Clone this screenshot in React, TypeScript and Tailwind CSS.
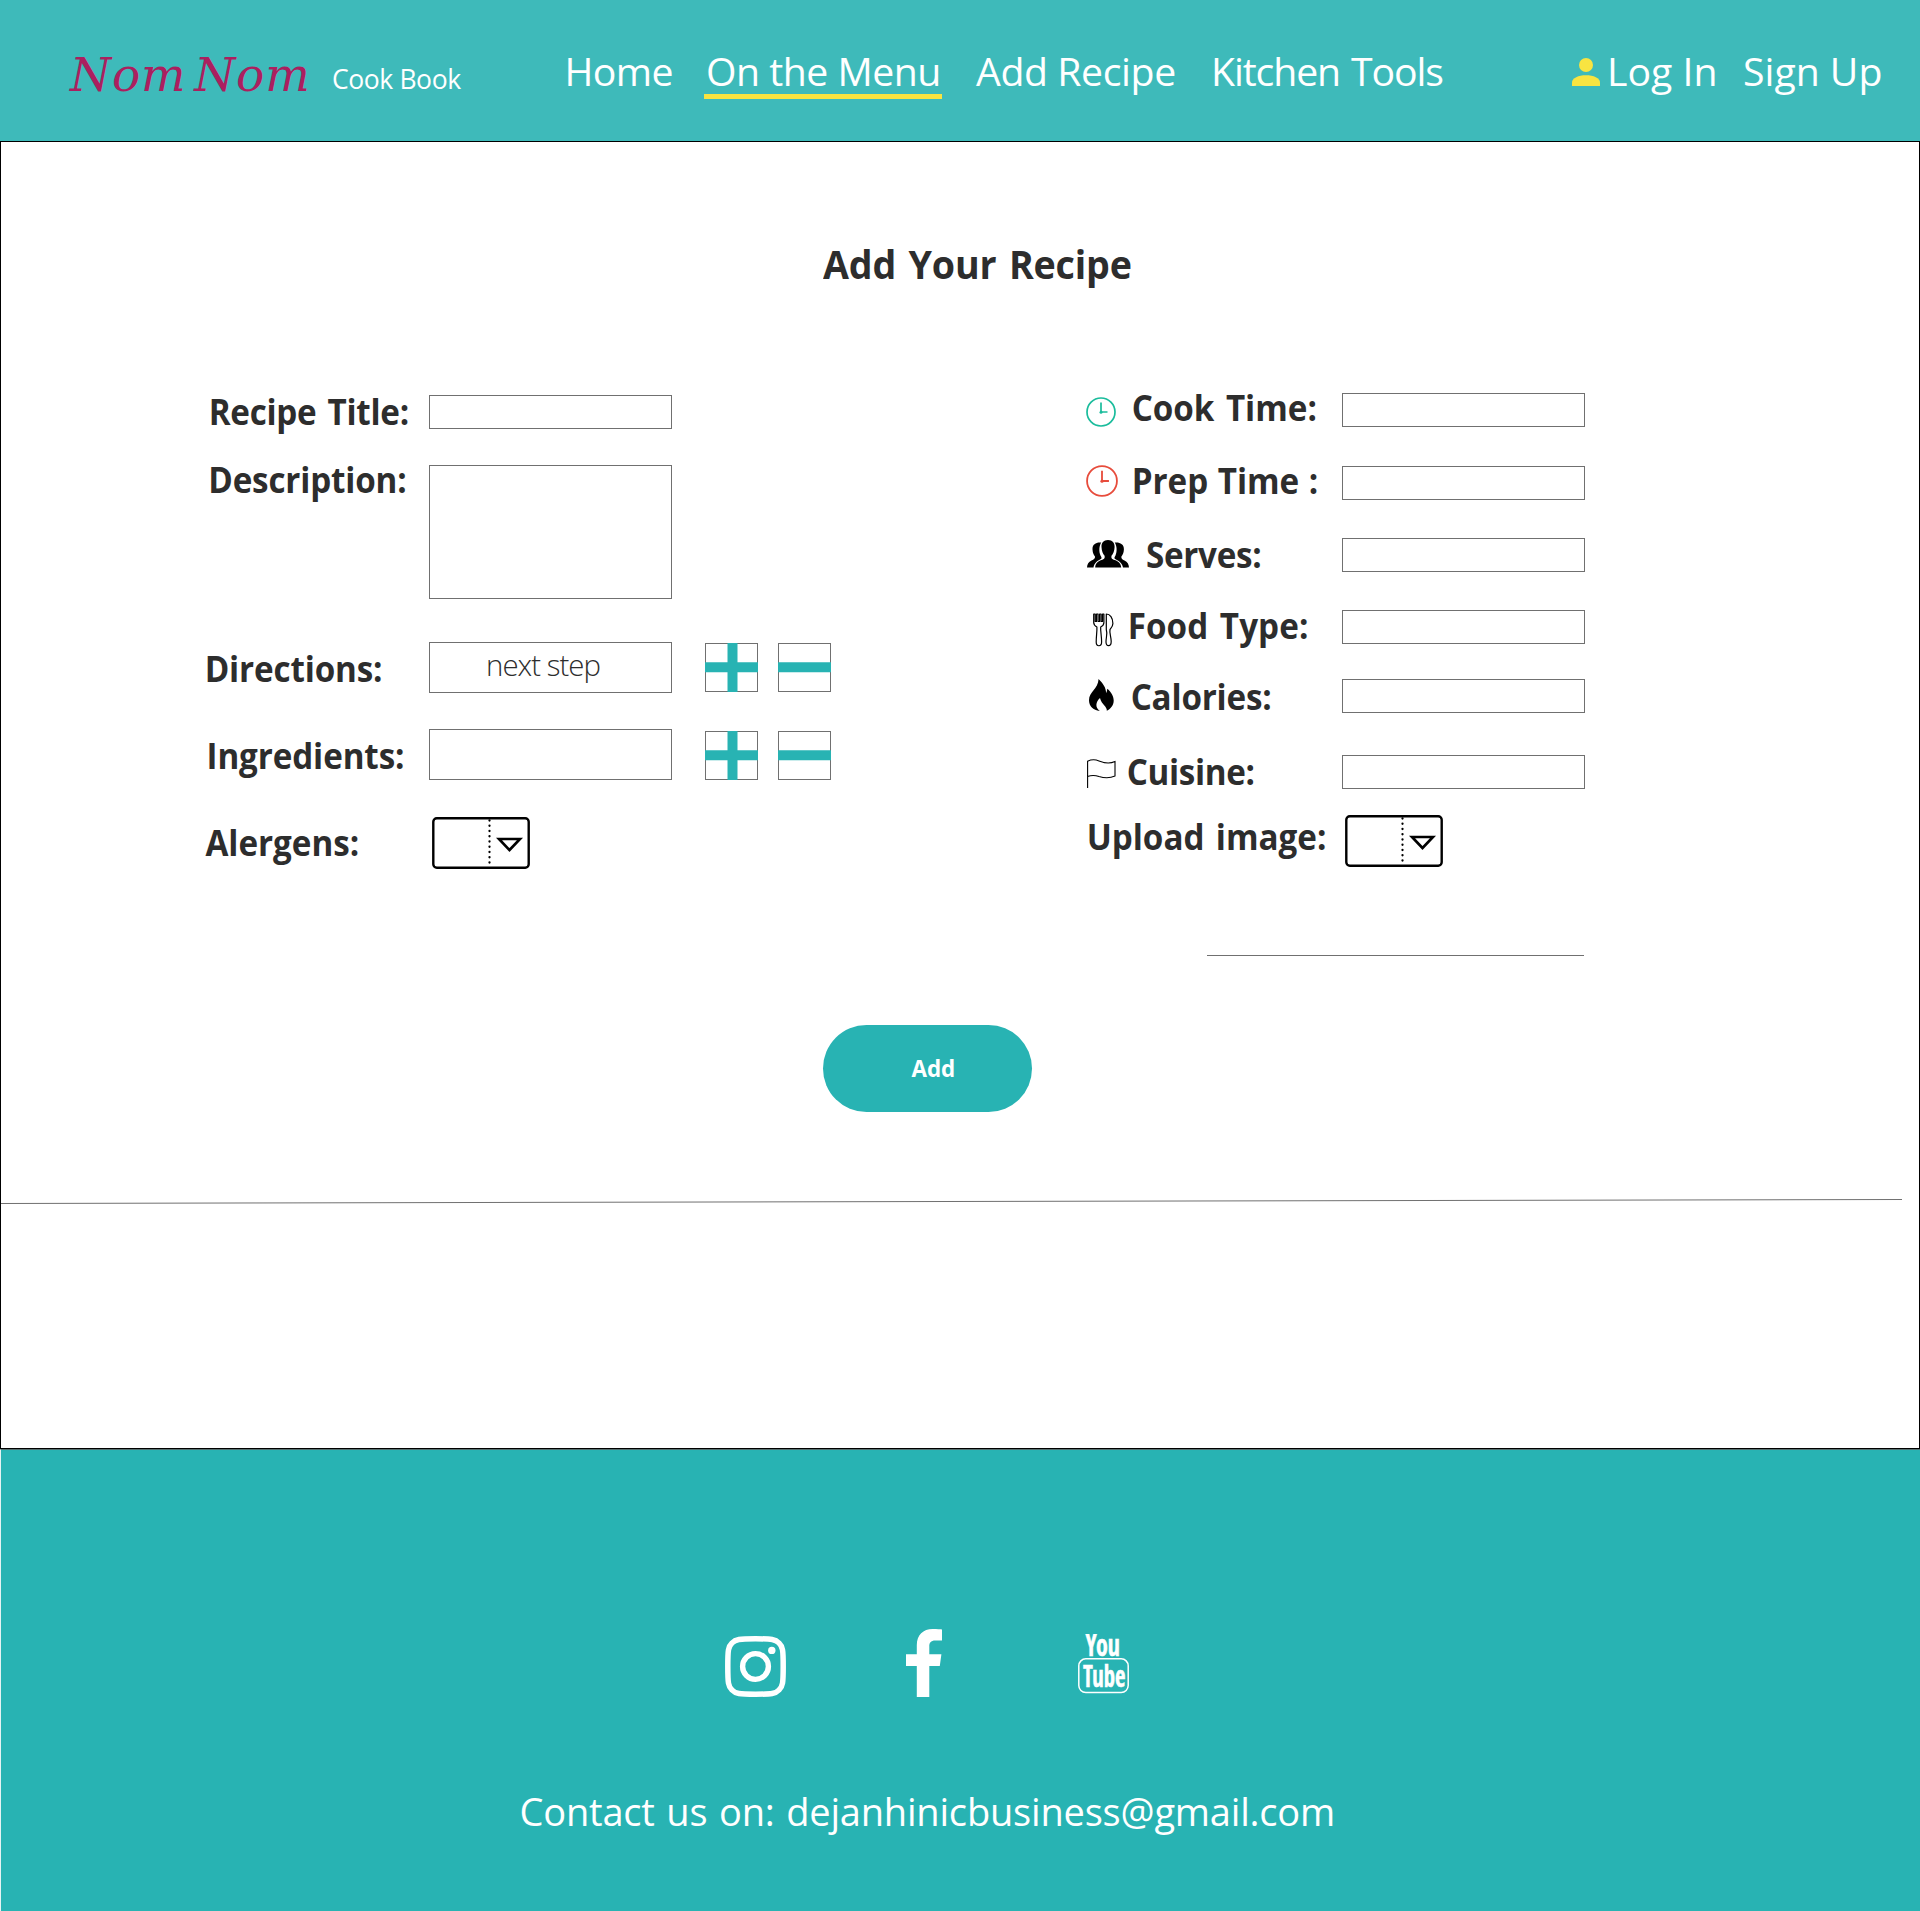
import React from "react";

const navText = "h-[56px] whitespace-nowrap text-[39.2px] leading-[56px] text-white";

function UserIcon() {
  return (
    <svg width="28" height="28" viewBox="0 0 28 28" fill="#f8e441" className="mt-[15px] mr-[7px] shrink-0">
      <circle cx="14" cy="7" r="7" />
      <path d="M0 28v-3.5C0 20 6.500 17.300 14 17.300S28 20 28 24.500V28Z" />
    </svg>
  );
}

function ClockIcon({ color, size }: { color: string; size: number }) {
  return (
    <svg width={size} height={size} viewBox="0 0 30 30" fill="none" stroke={color} strokeWidth="1.700">
      <circle cx="15" cy="15" r="14" />
      <path d="M15 5.500V15H21.500" />
      <circle cx="15" cy="15.200" r="1.500" fill={color} stroke="none" />
    </svg>
  );
}

function GroupIcon() {
  return (
    <svg width="42" height="28" viewBox="0 0 42 28" fill="#000">
      <path d="M14.300 2.600C10 1.900 5.200 3.700 5.500 9.500C5.700 13 6.800 15.200 8 16.500C8.300 18.500 7 19.300 4.500 20.500C1.500 22 .200 24 0 27.600H6.500C7 23 11 20.500 14.300 18.800C14.800 17.600 14.400 16.800 13.500 15.500C11.800 11.500 12 6 14.300 2.600Z" />
      <path d="M27.700 2.600C32 1.900 37.200 3.700 36.900 9.500C36.700 13 35.600 15.200 34.400 16.500C34.100 18.500 35 19.300 37.500 20.500C40.500 22 41.800 24 42 27.600H36C35.500 23 31 20.500 27.700 18.800C27.200 17.600 27.600 16.800 28.500 15.500C30.200 11.500 30 6 27.700 2.600Z" />
      <path d="M21 0C16.500 0 14.300 3.200 14.500 7C14.600 11 16 14 17.600 15.700C18 18.300 17.300 19 14.500 20.100C10.500 21.700 8.500 23.300 8.200 27.600H34.200C33.900 23.300 31.700 21.700 27.700 20.100C24.800 19 24.100 18.300 24.500 15.700C26.100 14 27.500 11 27.600 7C27.700 3.200 25.500 0 21 0Z" />
    </svg>
  );
}

function CutleryIcon() {
  return (
    <svg width="21" height="34" viewBox="0 0 21 34" fill="none" stroke="#000" strokeWidth="1.2" strokeLinejoin="round">
      <path d="M.7 1V9.500C.7 12 2 13 3.900 14C4.200 18 3.200 23 3.200 29C3.200 34 8.600 34 8.600 29C8.600 23 7.400 18 7.700 14C9.700 13 10.900 12 10.900 9.500V1H9.500V8.500H8.100V1H6.600V8.500H5.100V1H3.500V8.500H2.200V1Z" />
      <path d="M13.300 1C17 1 19.900 5 19.900 10.500C19.900 13.500 18 15 17 16.300C16.200 20 18.200 24 18.200 28.500C18.200 34 13 34 13 29C13 24 14.700 21 13.300 16.500Z" />
    </svg>
  );
}

function FlameIcon() {
  return (
    <svg width="25" height="32" viewBox="0 0 25 32" fill="#000">
      <path d="M9.600 0C14 4.500 17 8.500 17.100 14C18 12.800 18 11 18.300 9.800C22.500 13 24.700 18 24.700 21.500C24.700 26 22 29.800 17.800 31.800C18.300 27.500 12.500 25.500 11 19C6.500 23 6 28.500 10.800 31.900C4 31 0 27 0 21.200C0 13 9 10 9.600 0Z" />
    </svg>
  );
}

function FlagIcon() {
  return (
    <svg width="29" height="29" viewBox="0 0 29 29" fill="none" stroke="#000" strokeWidth="1.100">
      <path d="M.6 29V2.200C4 .6 8 .3 12 1.900C17 4 22.500 5 28 2.500V17C22.500 19.500 17 19 12 17.500C8 16.200 4 16.300 .6 17.500" />
    </svg>
  );
}

function SelectBox() {
  return (
    <svg width="98" height="52" viewBox="0 0 98 52" fill="none" stroke="#000" className="shrink-0">
      <rect x="1.300" y="1.300" width="95.400" height="49.400" rx="3.500" strokeWidth="2.400" />
      <path d="M57.500 3.500V50" strokeWidth="2.300" strokeLinecap="round" strokeDasharray="0.100 5.150" />
      <path d="M67 22H88L77.500 33Z" strokeWidth="2.600" />
    </svg>
  );
}

function StepButton({ plus = false }: { plus?: boolean }) {
  return (
    <button type="button" className="grid h-[49px] w-[53px] shrink-0 place-items-center border border-[#707070]">
      <svg width="53" height="49" viewBox="0 0 53 49" className="-m-px" fill="#28b3b3">
        <path d="M0 19.300h53v10H0z" />
        {plus && <path d="M22.500 0h10v49h-10z" />}
      </svg>
    </button>
  );
}

const label =
  "shrink-0 origin-left scale-x-[0.94] whitespace-nowrap text-[35.3px] leading-[49px] font-bold text-[#2d2d2d]";
const field = "w-[243px] shrink-0 border border-[#707070] bg-white outline-none";

const details = [
  { text: "Cook Time:", row: "h-[73px]", slot: "w-[45px] pt-[13.5px]", tracking: "w-[211px] pl-[0.7px] [word-spacing:3px]", input: "mt-[10px]", icon: <ClockIcon color="#1abc9c" size={30} /> },
  { text: "Prep Time :", row: "h-[74px]", slot: "w-[45px] pt-[9px]", tracking: "w-[211px] pl-[0.7px] [word-spacing:1px]", input: "mt-[10px]", icon: <ClockIcon color="#e74c3c" size={32} /> },
  { text: "Serves:", row: "h-[71px]", slot: "w-[60px] pt-[10px] pl-[1px]", tracking: "w-[196px] tracking-[-0.3px]", input: "mt-[8px]", icon: <GroupIcon /> },
  { text: "Food Type:", row: "h-[71px]", slot: "w-[41px] pt-[12px] pl-[7px]", tracking: "w-[215px] pl-[0.7px] tracking-[0.1px] [word-spacing:3px]", input: "mt-[9px]", icon: <CutleryIcon /> },
  { text: "Calories:", row: "h-[75px]", slot: "w-[44px] pt-[7px] pl-[2.5px]", tracking: "w-[212px] pl-[0.7px] tracking-[-0.2px]", input: "mt-[7px]", icon: <FlameIcon /> },
  { text: "Cuisine:", row: "h-[65px]", slot: "w-[40px] pt-[12px] pl-[1px]", tracking: "w-[216px] pl-[0.7px] tracking-[-0.33px]", input: "mt-[8px]", icon: <FlagIcon /> },
];

export default function App() {
  return (
    <div className="w-[1920px] overflow-hidden bg-white font-['Open_Sans',sans-serif]">
      <header className="flex h-[141px] items-start bg-[#3ebaba] pt-[43px] pl-[70px]">
        <div className="h-[56px] w-[262px] shrink-0 pt-[2px] font-['DejaVu_Serif',serif] text-[47px] leading-[60px] tracking-[0.8px] whitespace-nowrap text-[#ab1f5f] italic [word-spacing:-8px]">
          Nom Nom
        </div>
        <div className="w-[232px] shrink-0 pt-[10px] text-[26.5px] leading-[52px] tracking-[-0.4px] text-white">Cook Book</div>
        <nav className="flex">
          <a className={`${navText} w-[140px] pl-[0.5px] tracking-[-0.58px]`}>Home</a>
          <a className={`${navText} mr-[34px] w-[238px] border-b-[5px] border-[#f8e441] pl-[2px] tracking-[-0.5px]`}>On the Menu</a>
          <a className={`${navText} w-[235px] tracking-[-0.4px]`}>Add Recipe</a>
          <a className={`${navText} w-[361px] tracking-[-1.1px] [word-spacing:2px]`}>Kitchen Tools</a>
        </nav>
        <UserIcon />
        <a className={`${navText} w-[136px]`}>Log In</a>
        <a className={navText}>Sign Up</a>
      </header>

      <main className="h-[1308px] border border-black">
        <h1 className="mt-[94px] ml-[822px] origin-left scale-x-[0.96] text-[39.2px] leading-[56px] font-bold tracking-[-0.18px] text-[#2d2d2d] [word-spacing:3px]">
          Add Your Recipe
        </h1>

        <form className="mt-[91px]">
          <div className="flex pl-[203px]">
            <div className="w-[882px] pt-[4px]">
              <div className="flex h-[68px] items-start">
                <label className={`${label} w-[225px] pl-[5px] tracking-[-0.29px] [word-spacing:3px]`}>Recipe Title:</label>
                <input className={`${field} mt-[8px] h-[34px]`} />
              </div>
              <div className="flex h-[187px] items-start">
                <label className={`${label} w-[225px] pl-[4.5px] tracking-[-0.17px]`}>Description:</label>
                <textarea className={`${field} mt-[10px] h-[134px] resize-none`} />
              </div>
              <div className="flex h-[87px] items-start">
                <label className={`${label} w-[225px] pt-[2px] pl-[0.7px] tracking-[-0.14px]`}>Directions:</label>
                <input
                  placeholder="next step"
                  className={`${field} mr-[33px] h-[51px] pb-[5px] pl-[56px] text-[29.4px] font-light tracking-[-0.97px] placeholder:text-[#2d2d2d]`}
                />
                <div className="flex gap-[20px] pt-[1px]">
                  <StepButton plus />
                  <StepButton />
                </div>
              </div>
              <div className="flex h-[88px] items-start">
                <label className={`${label} w-[225px] pt-[2px] pl-[2.7px] tracking-[-0.11px]`}>Ingredients:</label>
                <input className={`${field} mr-[33px] h-[51px]`} />
                <div className="flex gap-[20px] pt-[2px]">
                  <StepButton plus />
                  <StepButton />
                </div>
              </div>
              <div className="flex items-start">
                <label className={`${label} w-[228px] pt-[1px] pl-[1.5px]`}>Alergens:</label>
                <SelectBox />
              </div>
            </div>

            <div>
              {details.map((d) => (
                <div key={d.text} className={`flex items-start ${d.row}`}>
                  <span className={`shrink-0 ${d.slot}`}>{d.icon}</span>
                  <label className={`${label} ${d.tracking}`}>{d.text}</label>
                  <input className={`${field} h-[34px] ${d.input}`} />
                </div>
              ))}
              <div className="flex h-[55px] items-start">
                <label className={`${label} w-[259px] pl-[0.7px] [word-spacing:3px]`}>Upload image:</label>
                <span className="pt-[3px]">
                  <SelectBox />
                </span>
              </div>
              <div className="mt-[88px] ml-[121px] h-px w-[377px] bg-[#707070]" />
            </div>
          </div>

          <button
            type="button"
            className="mt-[69px] ml-[822px] block h-[87px] w-[209px] rounded-full bg-[#28b3b3] pl-[88.5px] text-left text-[22.4px] leading-[87px] font-bold text-white"
          >
            Add
          </button>
        </form>

        <svg width="1918" height="7" viewBox="0 0 1918 7" className="mt-[86px] block">
          <path d="M0 5.500L1901 1.500" stroke="#707070" strokeWidth="1" />
        </svg>
      </main>

      <footer className="h-[462px] border-t border-l border-t-[#54706f] border-l-[#e5f3f3] bg-[#28b3b3] pt-[179px]">
        <div className="flex items-start pl-[724px]">
          <svg width="61" height="61" viewBox="0 0 61 61" fill="none" stroke="#fff" className="mt-[7px]">
            <path
              d="M30.500 2.800C47 2.800 50.500 3.200 54 7C57.800 10.500 58.200 14 58.200 30.500S57.800 50.500 54 54C50.500 57.800 47 58.200 30.500 58.200S10.500 57.800 7 54C3.200 50.500 2.800 47 2.800 30.500S3.200 10.500 7 7C10.500 3.200 14 2.800 30.500 2.800Z"
              strokeWidth="5.500"
            />
            <circle cx="30.500" cy="30.500" r="12.900" strokeWidth="5.400" />
            <circle cx="46.800" cy="14.400" r="3.700" fill="#fff" stroke="none" />
          </svg>
          <svg width="36" height="68" viewBox="0 0 36 68" fill="#fff" className="ml-[119.500px]">
            <path d="M36 .4V11.600H29.500C24.500 11.600 23.300 14 23.300 17.600V25.300H35.400L33.800 37H23.300V68H10.800V37H0V25.300H10.800V16.300C10.800 5.800 17.200 0 26.600 0C31 0 34.900 .3 36 .4Z" />
          </svg>
          <svg
            width="51"
            height="60"
            viewBox="0 0 51 60"
            fill="#fff"
            stroke="#fff"
            strokeWidth="0.500"
            className="mt-[5px] ml-[136.500px] font-['Open_Sans_Condensed','Roboto_Condensed',sans-serif] font-bold"
          >
            <text x="7.500" y="22" fontSize="30" textLength="34.500" lengthAdjust="spacingAndGlyphs">You</text>
            <rect x=".8" y="24.800" width="49.400" height="33.800" rx="7" fill="none" strokeWidth="1.500" />
            <text x="5" y="52.500" fontSize="31" textLength="42.500" lengthAdjust="spacingAndGlyphs">Tube</text>
          </svg>
        </div>
        <p className="mt-[84.5px] w-[860px] origin-left translate-x-[518.5px] scale-x-[0.97] text-[39.2px] leading-[57px] tracking-[-0.2px] whitespace-nowrap text-white [word-spacing:2px]">
          Contact us on: dejanhinicbusiness@gmail.com
        </p>
      </footer>
    </div>
  );
}
